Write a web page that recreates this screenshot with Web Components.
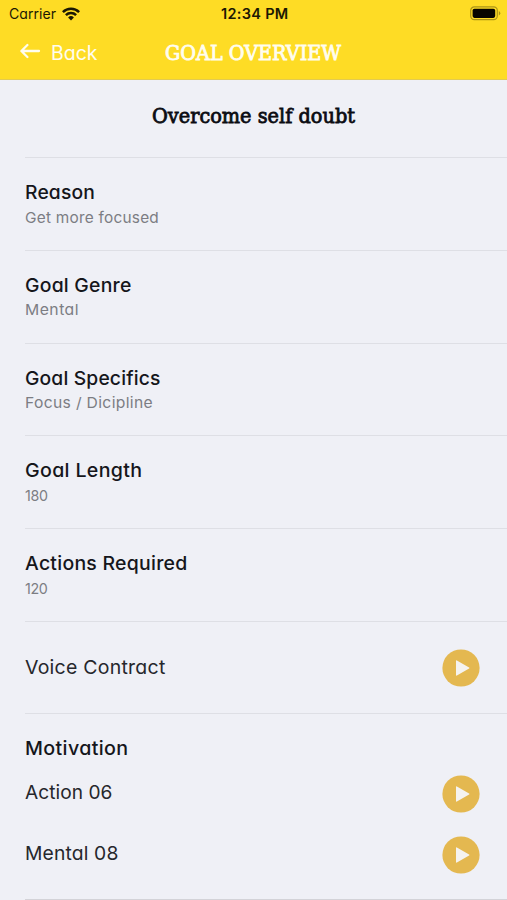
<!DOCTYPE html>
<html lang="en">
<head>
<meta charset="utf-8">
<title>Goal Overview</title>
<style>
html, body { margin: 0; height: 900px; overflow: hidden; background: #eff0f6; }
body { font-family: Inter, "Liberation Sans", sans-serif; color: #15161b; }
</style>
</head>
<body>
<goal-screen></goal-screen>
<script>
const define = (name, html, ready) => {
  const t = document.createElement('template');
  t.innerHTML = html;
  customElements.define(name, class extends HTMLElement {
    connectedCallback() {
      if (this.shadowRoot) return;
      this.attachShadow({ mode: 'open' }).append(t.content.cloneNode(true));
      if (ready) ready(this, this.shadowRoot);
    }
  });
};

// Text set to an exact width: half of the difference goes to tracking, the rest to glyph width;
// mode="scale" changes the glyph width only.
define('fit-text', `<style>
  :host { display: block; white-space: nowrap; flex: none; }
  span { display: inline-block; transform-origin: 0 50%; }
</style><span></span>`, (el, root) => {
  const s = root.querySelector('span');
  const w = +el.getAttribute('w');
  s.textContent = el.getAttribute('text');
  el.style.width = w + 'px';
  let natural = s.getBoundingClientRect().width;
  if (el.getAttribute('mode') !== 'scale') {
    const half = (w - natural) / 2;
    s.style.letterSpacing = half / s.textContent.length + 'px';
    natural += half;
  }
  s.style.transform = `scaleX(${w / natural})`;
});

define('status-bar', `<style>
  :host { display: grid; grid-template-columns: 1fr auto 1fr; align-items: center; height: 27px; padding: 0 7px 0 9px; color: #1b1803; font-size: 14px; }
  .l { display: flex; align-items: center; gap: 6px; }
  .r { justify-self: end; margin-right: -1px; }
  .time { font-weight: 600; }
  svg { display: block; }
</style>
<div class="l"><fit-text text="Carrier" w="47"></fit-text>
<svg width="18" height="14" viewBox="0 0 18 14" fill="none" stroke="#1b1803" stroke-width="2.5"><path d="M.9 5.1a11.5 11.5 0 0 1 16.2 0M3.9 8.2a7.2 7.2 0 0 1 10.2 0"/><path d="M9 13.4 6.1 10.5a4.1 4.1 0 0 1 5.8 0Z" fill="#1b1803" stroke="none"/></svg></div>
<fit-text class="time" text="12:34 PM" w="67.5"></fit-text>
<svg class="r" width="31" height="15" viewBox="0 0 31 15"><rect x=".7" y=".9" width="26.6" height="12.8" rx="3.6" fill="none" stroke="#aa9417" stroke-width="1.2"/><rect x="2.6" y="2.7" width="22.6" height="9.2" rx="1.8" fill="#070600"/><path d="M28.8 5v4.6q1.5-.8 1.5-2.3T28.8 5Z" fill="#aa9417"/></svg>`);

define('nav-bar', `<style>
  :host { display: grid; grid-template-columns: 165px 1fr; align-items: center; height: 52px; color: #fffdf0; border-bottom: 1px solid #e3cb50; }
  .back { display: flex; align-items: center; padding-left: 20px; gap: 10px; font-size: 19.5px; }
  .back svg { display: block; margin-top: -4px; }
  .back fit-text { margin-top: -1px; }
  .title { font: 20px/24px "Roboto Slab", "DejaVu Serif", serif; -webkit-text-stroke: .8px currentColor; margin-top: -1px; }
</style>
<div class="back"><svg width="21" height="16" viewBox="0 0 21 16" fill="none" stroke="#fffdf0" stroke-width="2.3" stroke-linecap="round" stroke-linejoin="round"><path d="M19 8H1.5M7.4 2 1.4 8l6 6"/></svg><fit-text text="Back" w="46.5"></fit-text></div>
<fit-text class="title" mode="scale" text="GOAL OVERVIEW" w="176"></fit-text>`);

define('play-button', `<style>
  :host { display: block; flex: none; width: 38px; height: 38px; }
  svg { display: block; }
</style>
<svg width="38" height="38" viewBox="0 0 38 38"><circle cx="19" cy="19" r="18.6" fill="#e4b850"/><path d="M14 12v14q0 1 .9.5l12.2-7q.8-.5 0-1l-12.2-7q-.9-.5-.9.5Z" fill="#f5f3f0"/></svg>`);

define('audio-row', `<style>
  :host { display: flex; align-items: center; justify-content: space-between; box-sizing: border-box; padding-right: 27px; font-size: 19px; line-height: 24px; color: #26272c; }
</style><slot></slot><play-button></play-button>`);

// One titled value; its texts and their widths come from data attributes.
customElements.define('goal-detail', class extends HTMLElement {
  connectedCallback() {
    const d = this.dataset;
    this.attachShadow({ mode: 'open' }).innerHTML = `<style>
      :host { display: block; box-sizing: border-box; height: 92.8px; border-top: 1px solid #dedfe5; padding-top: 23px; }
      .h { font-size: 19px; line-height: 24px; font-weight: 500; }
      .v { font-size: 15px; line-height: 20px; margin-top: 2.6px; color: #7c7d83; }
    </style><fit-text class="h" text="${d.h}" w="${d.hw}"></fit-text><fit-text class="v" text="${d.v}" w="${d.vw}"></fit-text>`;
  }
});

const rows = [
  ['Reason', 70, 'Get more focused', 134],
  ['Goal Genre', 106.5, 'Mental', 54],
  ['Goal Specifics', 135.5, 'Focus / Dicipline', 128],
  ['Goal Length', 117.5, '180', 22.5],
  ['Actions Required', 162.5, '120', 22.5]
];
const detail = r => `<goal-detail data-h="${r[0]}" data-hw="${r[1]}" data-v="${r[2]}" data-vw="${r[3]}"></goal-detail>`;

define('goal-screen', `<style>
  :host { display: flex; flex-direction: column; height: 900px; font-feature-settings: "cv11"; }
  header { background: #fedc25; }
  h1 { display: flex; justify-content: center; margin: 0; height: 77px; box-sizing: border-box; padding-top: 23px; font: 20px/26px "Roboto Slab", "DejaVu Serif", serif; -webkit-text-stroke: .8px currentColor; color: #0b0c12; }
  main { padding-left: 25.4px; }
  .voice { height: 92.5px; border-top: 1px solid #dedfe5; }
  section { border-top: 1px solid #dedfe5; border-bottom: 1px solid #d3d3d8; height: 162px; padding-top: 22.5px; }
  .m { font-size: 19px; line-height: 24px; font-weight: 500; }
  .a { height: 61px; }
  .first { margin-top: 2.5px; }
  .a fit-text { margin-top: -2px; }
</style>
<header><status-bar></status-bar><nav-bar></nav-bar></header>
<h1><fit-text mode="scale" text="Overcome self doubt" w="203"></fit-text></h1>
<main>${rows.map(detail).join('')}
<audio-row class="voice"><fit-text text="Voice Contract" w="140.5"></fit-text></audio-row>
<section><fit-text class="m" text="Motivation" w="103.5"></fit-text>
<audio-row class="a first"><fit-text text="Action 06" w="87.5"></fit-text></audio-row>
<audio-row class="a"><fit-text text="Mental 08" w="93.5"></fit-text></audio-row></section>
</main>`);
</script>
</body>
</html>
